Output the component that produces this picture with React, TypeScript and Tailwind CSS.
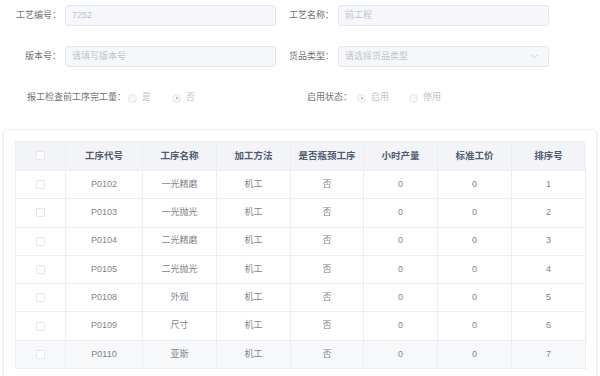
import React from "react";

const rows = [
  { code: "P0102", name: "一光精磨", sort: 1 },
  { code: "P0103", name: "一光抛光", sort: 2 },
  { code: "P0104", name: "二光精磨", sort: 3 },
  { code: "P0105", name: "二光抛光", sort: 4 },
  { code: "P0108", name: "外观", sort: 5 },
  { code: "P0109", name: "尺寸", sort: 6 },
  { code: "P0110", name: "亚斯", sort: 7 },
];

const headers = ["工序代号", "工序名称", "加工方法", "是否瓶颈工序", "小时产量", "标准工价", "排序号"];
const widths = ["w-[50px]", "w-[77px]", "w-[74px]", "w-[74px]", "w-[73px]", "w-[74px]", "w-[74px]", "w-[74px]"];

function Radio({ checked, label }: { checked?: boolean; label: string }) {
  return (
    <span className="flex items-center gap-[5px]">
      <span className="w-[9px] h-[9px] rounded-full border border-[#e4e7ed] bg-[#f5f7fa] flex items-center justify-center">
        {checked && <span className="w-[2px] h-[2px] rounded-full bg-[#a8abb2]" />}
      </span>
      <span className="text-[#c0c4cc]">{label}</span>
    </span>
  );
}

function Checkbox() {
  return <span className="inline-block w-[9px] h-[9px] border border-[#e4e7ed] bg-white rounded-[1px] align-middle" />;
}

function Field({
  label,
  value,
  placeholder,
  select,
  labelWidth,
}: {
  label: string;
  value?: string;
  placeholder?: string;
  select?: boolean;
  labelWidth: string;
}) {
  return (
    <div className="flex items-center">
      <span className={`${labelWidth} text-right text-[#6f7277] shrink-0`}>{label}</span>
      <div className="ml-[4px] w-[211px] h-[21px] rounded-[3px] border border-[#e4e7ed] bg-[#f5f7fa] flex items-center justify-between px-[6px]">
        <span className="text-[#c0c4cc]">{value ?? placeholder}</span>
        {select && (
          <svg width="7" height="5" viewBox="0 0 7 5" className="mr-[4px]">
            <path d="M0.5 1 L3.5 4 L6.5 1" fill="none" stroke="#c0c4cc" strokeWidth="0.8" />
          </svg>
        )}
      </div>
    </div>
  );
}

export default function App() {
  return (
    <div
      className="w-[600px] h-[376px] overflow-hidden bg-white text-[9px]"
      style={{ fontFamily: '"Liberation Sans", "Noto Sans CJK SC", sans-serif' }}
    >
      <div className="pt-[5px]">
        <div className="flex gap-[4px] h-[21px]">
          <Field label="工艺编号：" value="7252" labelWidth="w-[61px]" />
          <Field label="工艺名称：" value="前工程" labelWidth="w-[54px]" />
        </div>
        <div className="flex gap-[4px] h-[21px] mt-[20px]">
          <Field label="版本号：" placeholder="请填写版本号" labelWidth="w-[61px]" />
          <Field label="货品类型：" placeholder="请选择货品类型" select labelWidth="w-[54px]" />
        </div>
        <div className="flex items-center h-[20px] mt-[21px]">
          <div className="flex items-center w-[307px] pl-[27px]">
            <span className="text-[#6f7277]">报工检查前工序完工量：</span>
            <div className="flex items-center gap-[21px] ml-[2px]">
              <Radio label="是" />
              <Radio checked label="否" />
            </div>
          </div>
          <div className="flex items-center">
            <span className="text-[#6f7277] w-[50px]">启用状态：</span>
            <div className="flex items-center gap-[20px]">
              <Radio checked label="启用" />
              <Radio label="停用" />
            </div>
          </div>
        </div>
      </div>

      <div className="mt-[21px] ml-[3px] w-[594px] rounded-[4px] border border-[#ebeef5] shadow-[0_1px_4px_rgba(0,0,0,0.06)] pt-[11px] px-[11px] pb-[20px]">
        <table className="table-fixed border-collapse w-[570px]">
          <thead>
            <tr className="bg-[#f2f4f8] h-[29px]">
              <th className={`${widths[0]} border border-[#ebeef5] text-center`}>
                <Checkbox />
              </th>
              {headers.map((h, i) => (
                <th key={h} className={`${widths[i + 1]} border border-[#ebeef5] text-center font-bold text-[#515a6e] text-[9.5px]`}>
                  {h}
                </th>
              ))}
            </tr>
          </thead>
          <tbody>
            {rows.map((r, i) => (
              <tr key={r.code} className={`h-[28.3px] text-[#818489] ${i === rows.length - 1 ? "bg-[#f7f8fa]" : ""}`}>
                <td className="border border-[#ebeef5] text-center">
                  <Checkbox />
                </td>
                <td className="border border-[#ebeef5] text-center">{r.code}</td>
                <td className="border border-[#ebeef5] text-center">{r.name}</td>
                <td className="border border-[#ebeef5] text-center">机工</td>
                <td className="border border-[#ebeef5] text-center">否</td>
                <td className="border border-[#ebeef5] text-center">0</td>
                <td className="border border-[#ebeef5] text-center">0</td>
                <td className="border border-[#ebeef5] text-center">{r.sort}</td>
              </tr>
            ))}
          </tbody>
        </table>
      </div>
    </div>
  );
}
